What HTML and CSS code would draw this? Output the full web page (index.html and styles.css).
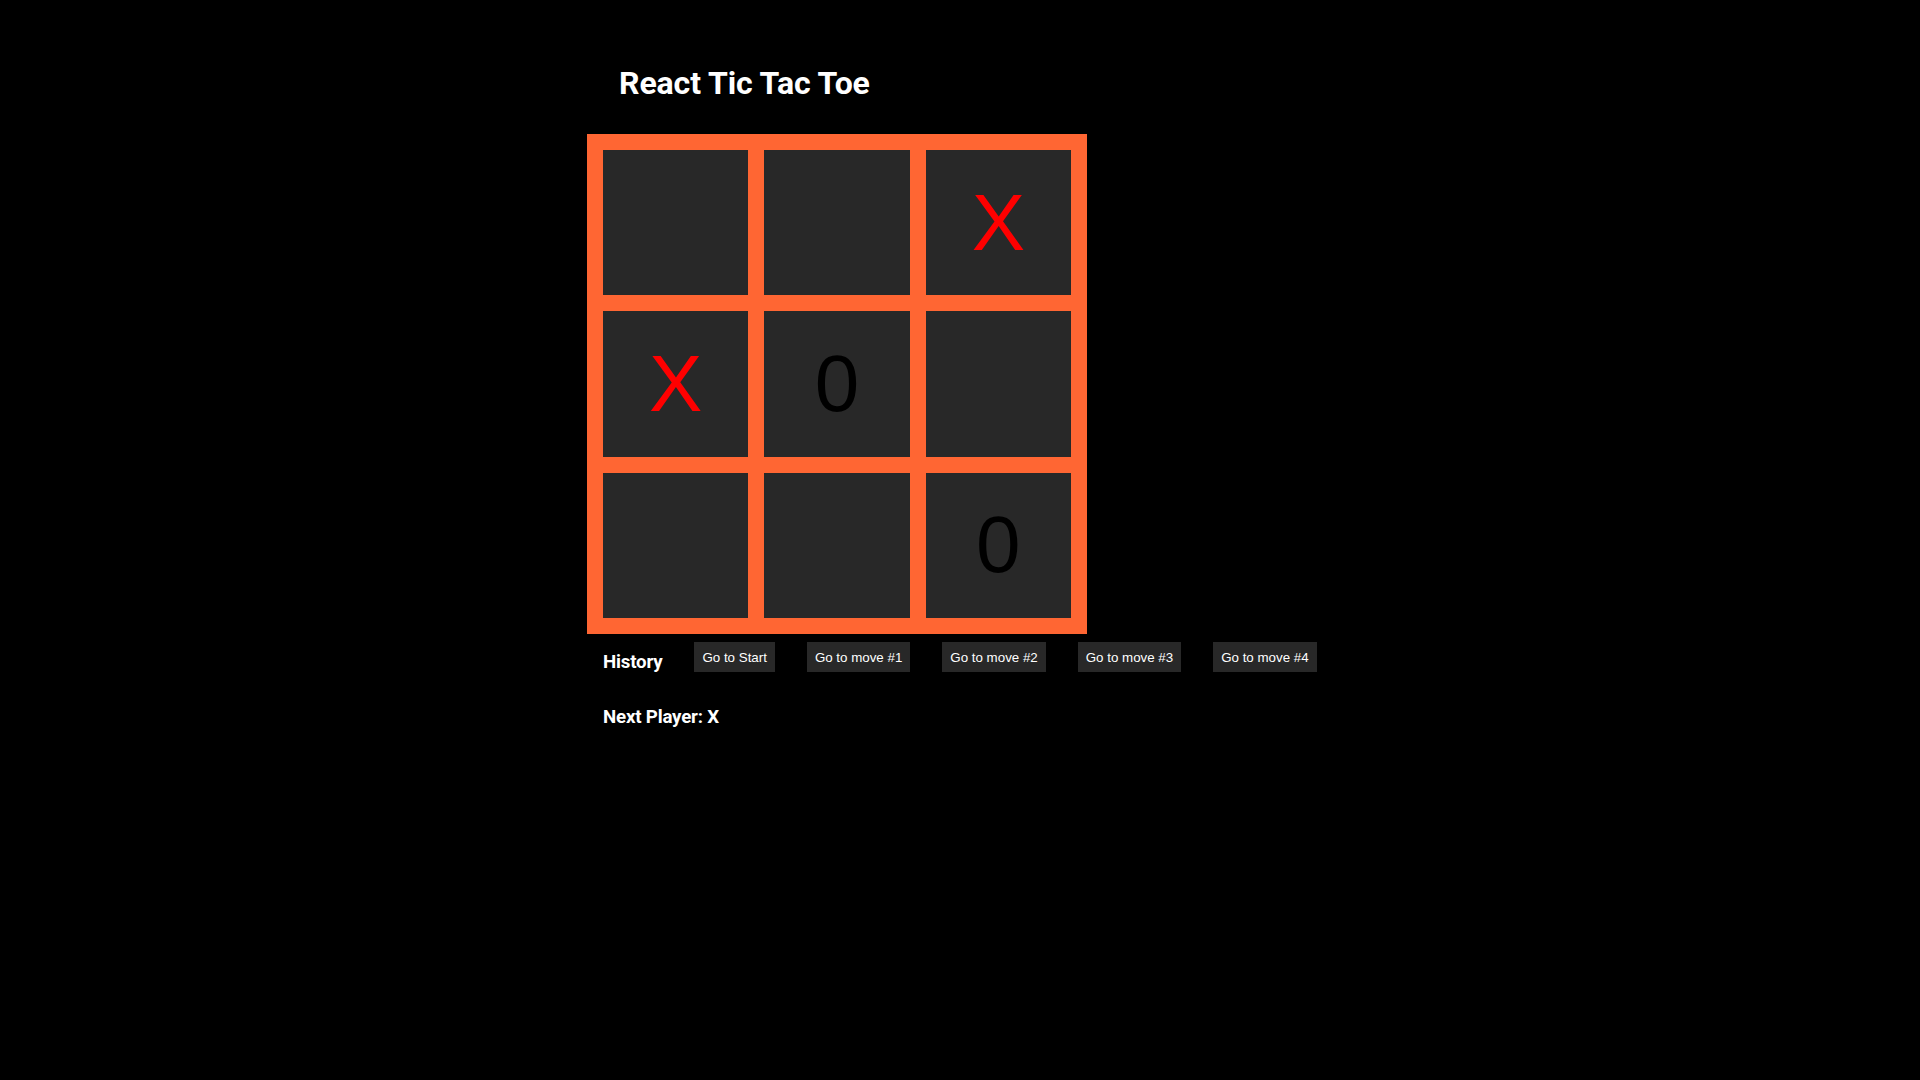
FILE: index.html
```html
<!DOCTYPE html>
<html lang="en">
<head>
<meta charset="utf-8">
<title>React Tic Tac Toe</title>
<link rel="stylesheet" href="styles.css">
</head>
<body>
<div class="app">
  <h1 class="title">React Tic Tac Toe</h1>
  <div class="board">
    <div class="cell"></div>
    <div class="cell"></div>
    <div class="cell x">X</div>
    <div class="cell x">X</div>
    <div class="cell o">0</div>
    <div class="cell"></div>
    <div class="cell"></div>
    <div class="cell"></div>
    <div class="cell o">0</div>
  </div>
  <div class="history">
    <h3 class="history-label">History</h3>
    <button class="move">Go to Start</button>
    <button class="move">Go to move #1</button>
    <button class="move">Go to move #2</button>
    <button class="move">Go to move #3</button>
    <button class="move">Go to move #4</button>
  </div>
  <h3 class="status">Next Player: X</h3>
</div>
</body>
</html>
```
FILE: styles.css
```css
html, body {
  margin: 0;
  padding: 0;
  background: #000;
}

body {
  font-family: Roboto, "Noto Sans", Arial, sans-serif;
  color: #fff;
}

.app {
  margin-left: 587px;
  padding-top: 64px;
}

.title {
  margin: 0 0 32px 0;
  padding-left: 32px;
  font-size: 32px;
  font-weight: 700;
  line-height: normal;
  letter-spacing: -0.1px;
  color: #fff;
}

.board {
  box-sizing: border-box;
  width: 500px;
  height: 500px;
  padding: 16px;
  background: #ff6633;
  display: grid;
  grid-template-columns: repeat(3, 1fr);
  grid-template-rows: repeat(3, 1fr);
  gap: 16px;
}

.cell {
  background: #282828;
  display: flex;
  align-items: center;
  justify-content: center;
  font-family: "Liberation Sans", Arial, sans-serif;
  font-size: 80px;
  line-height: normal;
}

.cell.x {
  color: #ff0000;
}

.cell.o {
  color: #000;
}

.history {
  display: flex;
  align-items: flex-start;
  gap: 32px;
  padding-left: 16px;
}

.history-label {
  margin: 16.5px 0 0 0;
  font-size: 18.72px;
  font-weight: 700;
  line-height: normal;
  letter-spacing: -0.2px;
  color: #fff;
}

.move {
  margin-top: 8px;
  padding: 8px 8px 7px;
  border: none;
  border-radius: 0;
  background: #282828;
  color: #fff;
  font-family: "Liberation Sans", Arial, sans-serif;
  font-size: 13.333px;
  line-height: normal;
  cursor: pointer;
}

.status {
  margin: 33.5px 0 0 0;
  padding-left: 16px;
  font-size: 18.72px;
  font-weight: 700;
  line-height: normal;
  letter-spacing: -0.2px;
  color: #fff;
}
```
